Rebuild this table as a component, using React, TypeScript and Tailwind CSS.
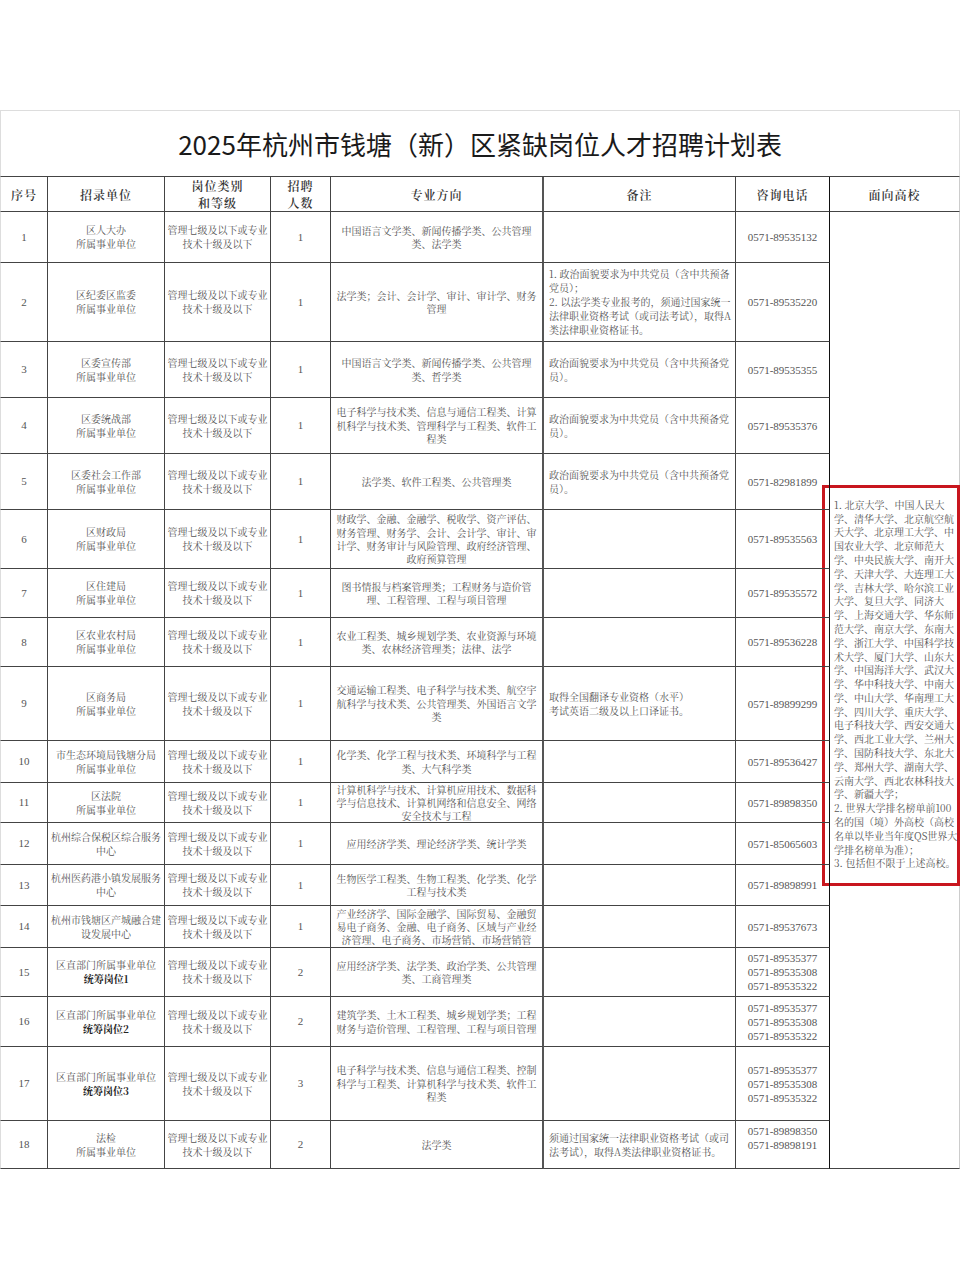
import React from 'react';

type Row = {
  no: number;
  h: string;
  unit: string[];
  bold?: string;
  count: number;
  major: string[];
  tight?: boolean;
  note?: string[];
  phones: string[];
  phoneCls?: string;
};

const LEVEL = ['管理七级及以下或专业', '技术十级及以下'];
const PARTY = ['政治面貌要求为中共党员（含中共预备党', '员）。'];
const P3 = ['0571-89535377', '0571-89535308', '0571-89535322'];

const rows: Row[] = [
  { no: 1, h: 'h-[51px]', unit: ['区人大办', '所属事业单位'], count: 1, major: ['中国语言文学类、新闻传播学类、公共管理', '类、法学类'], phones: ['0571-89535132'] },
  {
    no: 2,
    h: 'h-[79px]',
    unit: ['区纪委区监委', '所属事业单位'],
    count: 1,
    major: ['法学类；会计、会计学、审计、审计学、财务', '管理'],
    note: [
      '1. 政治面貌要求为中共党员（含中共预备',
      '党员）；',
      '2. 以法学类专业报考的，须通过国家统一',
      '法律职业资格考试（或司法考试），取得A',
      '类法律职业资格证书。',
    ],
    phones: ['0571-89535220'],
  },
  { no: 3, h: 'h-[56px]', unit: ['区委宣传部', '所属事业单位'], count: 1, major: ['中国语言文学类、新闻传播学类、公共管理', '类、哲学类'], note: PARTY, phones: ['0571-89535355'] },
  {
    no: 4,
    h: 'h-[56px]',
    unit: ['区委统战部', '所属事业单位'],
    count: 1,
    major: ['电子科学与技术类、信息与通信工程类、计算', '机科学与技术类、管理科学与工程类、软件工', '程类'],
    note: PARTY,
    phones: ['0571-89535376'],
  },
  { no: 5, h: 'h-[56px]', unit: ['区委社会工作部', '所属事业单位'], count: 1, major: ['法学类、软件工程类、公共管理类'], note: PARTY, phones: ['0571-82981899'] },
  {
    no: 6,
    h: 'h-[59px]',
    unit: ['区财政局', '所属事业单位'],
    count: 1,
    major: ['财政学、金融、金融学、税收学、资产评估、', '财务管理、财务学、会计、会计学、审计、审', '计学、财务审计与风险管理、政府经济管理、', '政府预算管理'],
    phones: ['0571-89535563'],
  },
  { no: 7, h: 'h-[49px]', unit: ['区住建局', '所属事业单位'], count: 1, major: ['图书情报与档案管理类；工程财务与造价管', '理、工程管理、工程与项目管理'], phones: ['0571-89535572'] },
  { no: 8, h: 'h-[49px]', unit: ['区农业农村局', '所属事业单位'], count: 1, major: ['农业工程类、城乡规划学类、农业资源与环境', '类、农林经济管理类；法律、法学'], phones: ['0571-89536228'] },
  {
    no: 9,
    h: 'h-[74px]',
    unit: ['区商务局', '所属事业单位'],
    count: 1,
    major: ['交通运输工程类、电子科学与技术类、航空宇', '航科学与技术类、公共管理类、外国语言文学', '类'],
    note: ['取得全国翻译专业资格（水平）', '考试英语二级及以上口译证书。'],
    phones: ['0571-89899299'],
  },
  { no: 10, h: 'h-[42px]', unit: ['市生态环境局钱塘分局', '所属事业单位'], count: 1, major: ['化学类、化学工程与技术类、环境科学与工程', '类、大气科学类'], phones: ['0571-89536427'] },
  {
    no: 11,
    h: 'h-[40px]',
    unit: ['区法院', '所属事业单位'],
    count: 1,
    major: ['计算机科学与技术、计算机应用技术、数据科', '学与信息技术、计算机网络和信息安全、网络', '安全技术与工程'],
    tight: true,
    phones: ['0571-89898350'],
  },
  { no: 12, h: 'h-[42px]', unit: ['杭州综合保税区综合服务', '中心'], count: 1, major: ['应用经济学类、理论经济学类、统计学类'], phones: ['0571-85065603'] },
  { no: 13, h: 'h-[41px]', unit: ['杭州医药港小镇发展服务', '中心'], count: 1, major: ['生物医学工程类、生物工程类、化学类、化学', '工程与技术类'], phones: ['0571-89898991'] },
  {
    no: 14,
    h: 'h-[42px]',
    unit: ['杭州市钱塘区产城融合建', '设发展中心'],
    count: 1,
    major: ['产业经济学、国际金融学、国际贸易、金融贸', '易电子商务、金融、电子商务、区域与产业经', '济管理、电子商务、市场营销、市场营销管'],
    tight: true,
    phones: ['0571-89537673'],
  },
  { no: 15, h: 'h-[49px]', unit: ['区直部门所属事业单位'], bold: '统筹岗位1', count: 2, major: ['应用经济学类、法学类、政治学类、公共管理', '类、工商管理类'], phones: P3 },
  { no: 16, h: 'h-[50px]', unit: ['区直部门所属事业单位'], bold: '统筹岗位2', count: 2, major: ['建筑学类、土木工程类、城乡规划学类；工程', '财务与造价管理、工程管理、工程与项目管理'], phones: P3 },
  {
    no: 17,
    h: 'h-[74px]',
    unit: ['区直部门所属事业单位'],
    bold: '统筹岗位3',
    count: 3,
    major: ['电子科学与技术类、信息与通信工程类、控制', '科学与工程类、计算机科学与技术类、软件工', '程类'],
    phones: P3,
  },
  {
    no: 18,
    h: 'h-[48px]',
    unit: ['法检', '所属事业单位'],
    count: 2,
    major: ['法学类'],
    note: ['须通过国家统一法律职业资格考试（或司', '法考试），取得A类法律职业资格证书。'],
    phones: ['0571-89898350', '0571-89898191'],
    phoneCls: 'pb-[14px]',
  },
];

const schools = [
  '1. 北京大学、中国人民大',
  '学、清华大学、北京航空航',
  '天大学、北京理工大学、中',
  '国农业大学、北京师范大',
  '学、中央民族大学、南开大',
  '学、天津大学、大连理工大',
  '学、吉林大学、哈尔滨工业',
  '大学、复旦大学、同济大',
  '学、上海交通大学、华东师',
  '范大学、南京大学、东南大',
  '学、浙江大学、中国科学技',
  '术大学、厦门大学、山东大',
  '学、中国海洋大学、武汉大',
  '学、华中科技大学、中南大',
  '学、中山大学、华南理工大',
  '学、四川大学、重庆大学、',
  '电子科技大学、西安交通大',
  '学、西北工业大学、兰州大',
  '学、国防科技大学、东北大',
  '学、郑州大学、湖南大学、',
  '云南大学、西北农林科技大',
  '学、新疆大学；',
  '2. 世界大学排名榜单前100',
  '名的国（境）外高校（高校',
  '名单以毕业当年度QS世界大',
  '学排名榜单为准）；',
  '3. 包括但不限于上述高校。',
];

const cell = 'border-b border-r border-[#444] p-0';
const num = "font-['Liberation_Serif',serif] text-[11px]";

function Lines({ items, className }: { items: string[]; className?: string }) {
  return (
    <div className={className}>
      {items.map((t, i) => (
        <div key={i} className="whitespace-nowrap">
          {t}
        </div>
      ))}
    </div>
  );
}

export default function App() {
  return (
    <div className="min-h-[1280px] bg-white pt-[110px] font-['Noto_Serif_CJK_SC','Noto_Sans_CJK_SC',sans-serif] text-[#555]">
      <table className="w-[960px] table-fixed border-separate border-spacing-0">
        <colgroup>
          <col className="w-[48px]" />
          <col className="w-[117px]" />
          <col className="w-[106px]" />
          <col className="w-[60px]" />
          <col className="w-[213px]" />
          <col className="w-[192px]" />
          <col className="w-[94px]" />
          <col className="w-[130px]" />
        </colgroup>
        <tbody>
          <tr className="h-[67px]">
            <td
              colSpan={8}
              className="border border-[#ddd] border-b-[#444] p-0 text-center font-['Noto_Sans_CJK_SC',sans-serif] text-[26px] text-[#1a1a1a]"
            >
              2025年杭州市钱塘（新）区紧缺岗位人才招聘计划表
            </td>
          </tr>

          {/* header */}
          <tr className="h-[35px] text-center text-[12px] leading-[17px] font-semibold tracking-[1px] text-[#333]">
            <td className={`${cell} border-l border-l-[#ddd]`}>序号</td>
            <td className={cell}>招录单位</td>
            <td className={cell}>
              岗位类别
              <br />
              和等级
            </td>
            <td className={cell}>
              招聘
              <br />
              人数
            </td>
            <td className={`${cell} border-r-2 border-r-[#555]`}>专业方向</td>
            <td className={cell}>备注</td>
            <td className={`${cell} border-r-[#111]`}>咨询电话</td>
            <td className={`${cell} border-r-[#ccc]`}>面向高校</td>
          </tr>

          {rows.map((r, idx) => (
            <tr key={r.no} className={`${r.h} text-[10px]`}>
              <td className={`${cell} border-l border-l-[#ddd] text-center ${num}`}>{r.no}</td>
              <td className={`${cell} text-center leading-[14px]`}>
                <Lines items={r.unit} />
                {r.bold && <div className="font-bold text-[#222]">{r.bold}</div>}
              </td>
              <td className={`${cell} text-center leading-[14px]`}>
                <Lines items={LEVEL} />
              </td>
              <td className={`${cell} text-center ${num}`}>{r.count}</td>
              <td
                className={`${cell} border-r-2 border-r-[#555] text-center ${r.tight ? 'leading-[13px]' : 'leading-[13.4px]'}`}
              >
                <Lines items={r.major} />
              </td>
              <td className={`${cell} pl-[5px] text-left leading-[14px]`}>
                {r.note && <Lines items={r.note} />}
              </td>
              <td className={`${cell} border-r-[#111] text-center leading-[14px] text-[#555] ${num} ${r.phoneCls ?? ''}`}>
                <Lines items={r.phones} />
              </td>
              {idx === 0 && (
                <td rowSpan={18} className={`${cell} border-r-[#ccc] align-middle`}>
                  <div className="mb-[9px] -ml-[8px] w-[138px] border-[3px] border-[#c8161e] pt-[10px] pr-[2px] pb-[13px] pl-[9px] text-left text-[10px] leading-[13.8px]">
                    <Lines items={schools} />
                  </div>
                </td>
              )}
            </tr>
          ))}
        </tbody>
      </table>
    </div>
  );
}
